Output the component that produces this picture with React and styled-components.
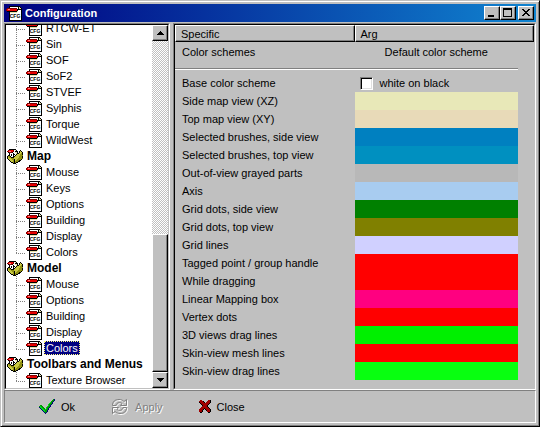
import React from "react";
import styled, { createGlobalStyle, css } from "styled-components";

const face = "#c0c0c0";
const dark = "#808080";

const Global = createGlobalStyle`
  * { box-sizing: border-box; }
  html, body { margin: 0; background: ${face}; }
  body, button, input {
    font-family: "Liberation Sans", Arial, sans-serif;
    font-size: 11px;
    line-height: 16px;
    color: #000;
  }
`;

const raised = css`
  border: 1px solid;
  border-color: #fff #000 #000 #fff;
  box-shadow: inset -1px -1px 0 ${dark};
`;

const sunken = css`
  border: 1px solid;
  border-color: ${dark} #fff #fff ${dark};
`;

const Window = styled.main`
  display: flex;
  flex-direction: column;
  height: 100vh;
  padding: 3px;
  border: 1px solid;
  border-color: ${face} #000 #000 ${face};
  background: ${face};
  box-shadow: inset 1px 1px 0 #fff, inset -1px -1px 0 ${dark};
`;

const TitleBar = styled.header`
  display: flex;
  align-items: center;
  flex: none;
  height: 18px;
  padding: 0 2px;
  gap: 2px;
  color: #fff;
  background: linear-gradient(to right, #000080, #1084d0);
`;

const Title = styled.h1`
  flex: 1;
  margin: 0;
  padding-left: 1px;
  font-size: 11px;
  line-height: 16px;
  font-weight: bold;
`;

const WindowButtons = styled.div`
  display: flex;
`;

const SmallButton = styled.button`
  ${raised}
  display: flex;
  align-items: center;
  justify-content: center;
  flex: none;
  width: 16px;
  height: ${(p) => p.$height}px;
  margin: 0;
  padding: 0;
  background: ${face};
`;

const Body = styled.div`
  display: flex;
  flex: 1;
  min-height: 0;
  margin-top: 1px;
  gap: 3px;
`;

const Panel = styled.section`
  ${sunken}
  display: flex;
  min-width: 0;
  flex: ${(p) => p.$flex};
`;

const PanelInner = styled.div`
  display: flex;
  flex: 1;
  min-width: 0;
  flex-direction: ${(p) => p.$direction};
  border: 1px solid;
  border-color: #000 ${face} ${face} #000;
  background: ${(p) => p.$background};
  overflow: hidden;
`;

const Tree = styled.nav`
  display: flex;
  flex: 1;
  flex-direction: column;
  justify-content: flex-end;
  overflow: hidden;
`;

const Group = styled.div`
  display: flex;
  align-items: center;
  flex: none;
  height: 16px;
  padding-left: 1px;
  gap: 4px;
  font-size: 12px;
  font-weight: bold;
  white-space: nowrap;
`;

const Leaf = styled.div`
  display: flex;
  flex: none;
  height: 16px;
  padding-left: 10px;
`;

const Branch = styled.span`
  flex: none;
  width: 10px;
  height: ${(p) => (p.$last ? 10 : 16)}px;
  background-image:
    repeating-linear-gradient(to bottom, ${dark} 0 1px, transparent 1px 2px),
    repeating-linear-gradient(to right, ${dark} 0 1px, transparent 1px 2px);
  background-size: 1px 100%, 100% 1px;
  background-position: 0 0, 0 9px;
  background-repeat: no-repeat;
`;

const LeafLink = styled.a`
  margin: 1px 0 1px 2px;
  padding: 0 2px;
  line-height: 14px;
  color: ${(p) => (p.$selected ? "#fff" : "#000")};
  background: ${(p) => (p.$selected ? "#000080" : "transparent")};
  outline: ${(p) => (p.$selected ? "1px dotted #ffff7f" : "none")};
  outline-offset: -1px;
  text-decoration: none;
  white-space: nowrap;
`;

const ScrollBar = styled.div`
  display: flex;
  flex: none;
  flex-direction: column;
  width: 16px;
  background: repeating-conic-gradient(#fff 0 25%, ${face} 0 50%) 0 0 / 2px 2px;
`;

const Thumb = styled.div`
  ${raised}
  height: 38%;
  flex: none;
  margin-top: auto;
  background: ${face};
`;

const Grid = styled.table`
  width: 100%;
  border-collapse: collapse;
  table-layout: fixed;
`;

const HeadCell = styled.th`
  height: 18px;
  padding: 0 0 1px;
  width: 50%;
  font-weight: normal;
  text-align: left;
`;

const HeadLabel = styled.div`
  ${raised}
  height: 17px;
  padding-left: 5px;
`;

const NameCell = styled.td`
  height: 18px;
  padding: 0 0 0 7px;
  line-height: 18px;
  white-space: nowrap;
`;

const ValueCell = styled.td`
  height: 18px;
  padding: 0 16px 0 0;
  line-height: 18px;
`;

const RuleCell = styled.td`
  padding: 7px 16px 4px 0;
`;

const Rule = styled.hr`
  height: 2px;
  margin: 0;
  border: 0;
  border-top: 1px solid ${dark};
  border-bottom: 1px solid #fff;
`;

const Scheme = styled.div`
  text-align: center;
`;

const Swatch = styled.div`
  height: 18px;
  background: ${(p) => p.$color};
`;

const CheckLabel = styled.label`
  display: flex;
  align-items: center;
  padding-left: 5px;
  gap: 7px;
`;

const CheckBox = styled.input`
  appearance: none;
  width: 13px;
  height: 13px;
  margin: 0;
  border: 1px solid;
  border-color: ${dark} #fff #fff ${dark};
  background: #fff;
  box-shadow: inset 1px 1px 0 #000, inset -1px -1px 0 #dfdfdf;
`;

const Footer = styled.footer`
  display: flex;
  align-items: center;
  flex: none;
  height: 33px;
  padding-left: 34px;
  gap: 36px;
  border: 1px solid;
  border-color: ${dark} #fff #fff ${dark};
`;

const ToolButton = styled.button`
  display: flex;
  align-items: center;
  height: 20px;
  padding: 0;
  gap: 6px;
  border: 0;
  background: transparent;
  color: #000;
  &:disabled { color: ${dark}; text-shadow: 1px 1px 0 #fff; }
`;

const Icon = styled.svg`
  display: block;
  flex: none;
  shape-rendering: ${(p) => (p.$smooth ? "auto" : "crispEdges")};
`;

const palette = {
  k: "#000", w: "#fff", r: "#e80000", p: "#ff8080", d: "#800000", y: "#e8e0a8",
  o: "#909010", l: "#c8c840", g: "#606000", G: "#009800", L: "#00d820", b: "#000080", R: "#a00000",
};

function Pixels({ rows }) {
  const cells = [];
  rows.forEach((row, y) =>
    [...row].forEach((c, x) => {
      if (palette[c]) cells.push(<rect key={`${x}-${y}`} x={x} y={y} width="1" height="1" fill={palette[c]} />);
    })
  );
  return cells;
}

const sheet = [
  "................",
  "...kkkkkkkkkkk..",
  "...kwwwwwwwwkyk.",
  ".ddddddddddwkyyk",
  "drpprrrrrrrkkkkk",
  "drrrrrrrrrrkwwwk",
  ".kkkkkkkkkkywwwk",
  "...kyyyyyyywwwwk",
  "...kwwwwwwwwwwwk",
  "...kwwwwwwwwwwwk",
  "...kwwwwwwwwwwwk",
  "...kwwwwwwwwwwwk",
  "...kwwwwwwwwwwwk",
  "...kwwwwwwwwwwwk",
  "...kwwwwwwwwwwwk",
  "...kkkkkkkkkkkkk",
];

const box = [
  "................",
  "..kkkkkkk.......",
  ".drrrrdwyk...k..",
  "drpprrdwkkk.klk.",
  ".kdddkwwyyk.kllk",
  "..kwwwkwwykkllok",
  "..kwkwkkwklllook",
  ".kkwkwkwklllloook".slice(0, 16),
  "kookwwkklllloook",
  "klookkkllllloook",
  "klllooolllloooog",
  ".klllookllooook.",
  "..klllokloookk..",
  "...kllokoookk...",
  "....kkokokk.....",
  "......kkk.......",
];

const tick = [
  "..............Gb",
  ".............GGb",
  "............GGb.",
  "...........LGb..",
  "..........LGGb..",
  ".........LGGb...",
  ".GG......LGb....",
  "GLGG....LGGb....",
  "bLLGG..LGGb.....",
  ".bLLGG.LGb......",
  "..bLLGLGGb......",
  "...bLLGGb.......",
  "....bLGGb.......",
  ".....bGb........",
  "......b.........",
];

const cross = [
  ".RR......RRk",
  "RRRRk...RRRk",
  "kRRRRk.RRRRk",
  ".kRRRRRRRRk.",
  "..kRRRRRRk..",
  "...kRRRRk...",
  "...RRRRRk...",
  "..RRRRRRRk..",
  ".RRRRkRRRRk.",
  "RRRRk.kRRRRk",
  "RRRk...kRRRk",
  "RRRk....RRRk",
  ".kk......kk.",
];

const SheetIcon = () => (
  <Icon width="16" height="16" viewBox="0 0 16 16" aria-hidden="true">
    <Pixels rows={sheet} />
    <text x="9" y="13" fontSize="5" fontWeight="bold" textAnchor="middle">CFG</text>
  </Icon>
);

const PixelIcon = ({ rows }) => (
  <Icon width={rows[0].length} height={rows.length} viewBox={`0 0 ${rows[0].length} ${rows.length}`} aria-hidden="true">
    <Pixels rows={rows} />
  </Icon>
);

const Arrow = ({ up }) => (
  <Icon width="7" height="4" viewBox="0 0 7 4" aria-hidden="true">
    <Pixels rows={up ? ["...k...", "..kkk..", ".kkkkk.", "kkkkkkk"] : ["kkkkkkk", ".kkkkk.", "..kkk..", "...k..."]} />
  </Icon>
);

const arc = "M1.5 7.5C1.5 3.5 4 1.5 8 1.5C10 1.5 11.5 2 13 3.5L15.5 1.5V7.5H9.5L11 5.5C9 4 6 4 5 7.5Z";

const ReloadIcon = () => (
  <Icon $smooth width="18" height="18" viewBox="0 0 18 18" aria-hidden="true" fill="none">
    <g stroke="#fff" transform="translate(1 1)">
      <path d={arc} />
      <path d={arc} transform="rotate(180 8.5 8.5)" />
    </g>
    <g stroke={dark}>
      <path d={arc} />
      <path d={arc} transform="rotate(180 8.5 8.5)" />
    </g>
  </Icon>
);

const groups = [
  { items: ["RTCW-ET", "Sin", "SOF", "SoF2", "STVEF", "Sylphis", "Torque", "WildWest"] },
  { name: "Map", items: ["Mouse", "Keys", "Options", "Building", "Display", "Colors"] },
  { name: "Model", items: ["Mouse", "Options", "Building", "Display", "Colors"], selected: 4 },
  { name: "Toolbars and Menus", items: ["Texture Browser"] },
];

const colors = [
  ["Side map view (XZ)", "#e8e8b8"],
  ["Top map view (XY)", "#e8dab8"],
  ["Selected brushes, side view", "#0080c0"],
  ["Selected brushes, top view", "#0090c0"],
  ["Out-of-view grayed parts", "#b8b8b8"],
  ["Axis", "#a8ccf0"],
  ["Grid dots, side view", "#008000"],
  ["Grid dots, top view", "#808000"],
  ["Grid lines", "#d0d0ff"],
  ["Tagged point / group handle", "#ff0000"],
  ["While dragging", "#ff0000"],
  ["Linear Mapping box", "#ff0080"],
  ["Vertex dots", "#ff0000"],
  ["3D views drag lines", "#00f000"],
  ["Skin-view mesh lines", "#ff0000"],
  ["Skin-view drag lines", "#08ff10"],
];

export default function App() {
  return (
    <Window>
      <Global />
      <TitleBar>
        <SheetIcon />
        <Title>Configuration</Title>
        <WindowButtons>
          <SmallButton $height={14} aria-label="Minimize">
            <Icon width="10" height="10" viewBox="0 0 10 10"><path fill="#000" d="M1 7h6v2H1z" /></Icon>
          </SmallButton>
          <SmallButton $height={14} aria-label="Maximize">
            <Icon width="10" height="10" viewBox="0 0 10 10"><path fill="#000" fillRule="evenodd" d="M0 0h9v9H0z M1 2v6h7V2z" /></Icon>
          </SmallButton>
        </WindowButtons>
        <SmallButton $height={14} aria-label="Close">
          <PixelIcon rows={["kk....kk", ".kk..kk.", "..kkkk..", "...kk...", "..kkkk..", ".kk..kk.", "kk....kk", "........"]} />
        </SmallButton>
      </TitleBar>
      <Body>
        <Panel $flex="0 0 166px">
          <PanelInner $direction="row" $background="#fff">
            <Tree aria-label="Sections">
              {groups.map((g, gi) => (
                <React.Fragment key={gi}>
                  {g.name && <Group><PixelIcon rows={box} />{g.name}</Group>}
                  {g.items.map((item, i) => (
                    <Leaf key={item}>
                      <Branch $last={gi > 0 && i === g.items.length - 1} />
                      <SheetIcon />
                      <LeafLink href="#" $selected={g.selected === i}>{item}</LeafLink>
                    </Leaf>
                  ))}
                </React.Fragment>
              ))}
            </Tree>
            <ScrollBar>
              <SmallButton $height={16} aria-label="Scroll up"><Arrow up /></SmallButton>
              <Thumb />
              <SmallButton $height={16} aria-label="Scroll down"><Arrow /></SmallButton>
            </ScrollBar>
          </PanelInner>
        </Panel>
        <Panel $flex="1">
          <PanelInner $direction="column" $background={face}>
            <Grid>
              <thead>
                <tr>
                  <HeadCell><HeadLabel>Specific</HeadLabel></HeadCell>
                  <HeadCell><HeadLabel>Arg</HeadLabel></HeadCell>
                </tr>
              </thead>
              <tbody>
                <tr>
                  <NameCell>Color schemes</NameCell>
                  <ValueCell><Scheme>Default color scheme</Scheme></ValueCell>
                </tr>
                <tr><RuleCell colSpan={2}><Rule /></RuleCell></tr>
                <tr>
                  <NameCell>Base color scheme</NameCell>
                  <ValueCell>
                    <CheckLabel><CheckBox type="checkbox" />white on black</CheckLabel>
                  </ValueCell>
                </tr>
                {colors.map(([name, color]) => (
                  <tr key={name}>
                    <NameCell>{name}</NameCell>
                    <ValueCell><Swatch $color={color} /></ValueCell>
                  </tr>
                ))}
              </tbody>
            </Grid>
          </PanelInner>
        </Panel>
      </Body>
      <Footer>
        <ToolButton><PixelIcon rows={tick} />Ok</ToolButton>
        <ToolButton disabled><ReloadIcon />Apply</ToolButton>
        <ToolButton><PixelIcon rows={cross} />Close</ToolButton>
      </Footer>
    </Window>
  );
}
